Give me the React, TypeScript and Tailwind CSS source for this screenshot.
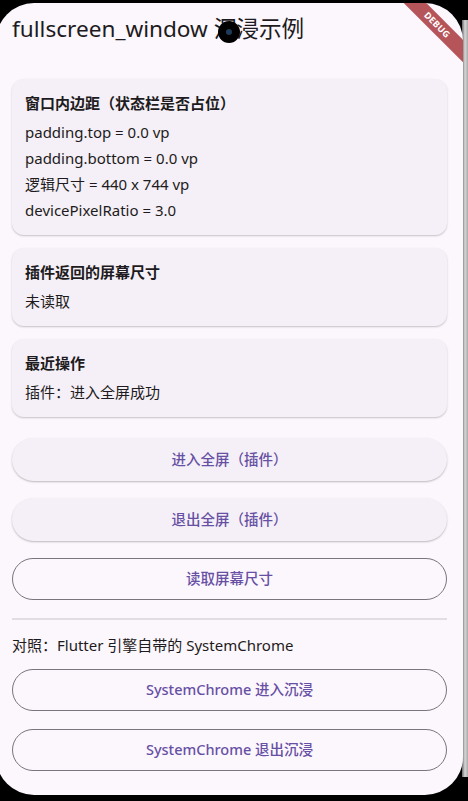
import React from "react";

const font = {
  fontFamily: '"Noto Sans", "Noto Sans CJK SC", sans-serif',
};

function InfoCard({ title, lines }: { title: string; lines: string[] }) {
  return (
    <div className="rounded-[12px] bg-[#F5F0F7] px-[13px] pt-[11px] pb-[12px] shadow-[0_1px_2px_rgba(0,0,0,0.22)]">
      <div className="text-[15px] leading-[26px] font-bold text-[#1D1B20]">
        {title}
      </div>
      <div className="mt-[3px]">
        {lines.map((line) => (
          <div key={line} className="text-[15px] leading-[26px] text-[#1D1B20]">
            {line}
          </div>
        ))}
      </div>
    </div>
  );
}

function ElevatedButton({ label }: { label: string }) {
  return (
    <button className="flex h-[43px] w-full items-center justify-center rounded-full bg-[#F5F0F7] text-[14.5px] font-medium text-[#6750A4] shadow-[0_1px_2px_rgba(0,0,0,0.25)]">
      {label}
    </button>
  );
}

function OutlinedButton({ label }: { label: string }) {
  return (
    <button className="flex h-[42px] w-full items-center justify-center rounded-full border border-[#79747E] text-[14.5px] font-medium text-[#6750A4]">
      {label}
    </button>
  );
}

export default function App() {
  return (
    <div
      className="relative h-[801px] w-[468px] overflow-hidden bg-black"
      style={font}
    >
      {/* right bezel */}
      <div className="absolute right-0 top-[20px] bottom-[24px] w-[6px] bg-gradient-to-r from-[#6b6b6b] via-[#d8d8d8] to-[#a8a8a8]" />

      {/* screen */}
      <div className="relative mt-[3px] ml-[-4px] h-[792px] w-[467px] overflow-hidden rounded-[38px] bg-[#FCF6FD]">
        {/* debug ribbon */}
        <div className="absolute right-[-34px] top-[14px] flex h-[16px] w-[120px] rotate-45 items-center justify-center bg-[#B5555A]">
          <span className="text-[9px] font-bold tracking-[0.3px] text-white">
            DEBUG
          </span>
        </div>

        {/* camera */}
        <div className="absolute left-[222px] top-[18px] flex h-[22px] w-[22px] items-center justify-center rounded-full bg-black">
          <div className="h-[6px] w-[6px] rounded-full bg-[#1f3b5a]" />
        </div>

        <div className="pl-[16px] pr-[16px]">
          <div className="flex h-[52px] items-center">
            <span className="text-[22.6px] text-[#1D1B20]">
              fullscreen_window 沉浸示例
            </span>
          </div>

          <div className="flex flex-col gap-[13px] pt-[24px]">
            <InfoCard
              title="窗口内边距（状态栏是否占位）"
              lines={[
                "padding.top = 0.0 vp",
                "padding.bottom = 0.0 vp",
                "逻辑尺寸 = 440 x 744 vp",
                "devicePixelRatio = 3.0",
              ]}
            />
            <InfoCard title="插件返回的屏幕尺寸" lines={["未读取"]} />
            <InfoCard title="最近操作" lines={["插件：进入全屏成功"]} />
          </div>

          <div className="mt-[21px] flex flex-col gap-[17px]">
            <ElevatedButton label="进入全屏（插件）" />
            <ElevatedButton label="退出全屏（插件）" />
            <OutlinedButton label="读取屏幕尺寸" />
          </div>

          <div className="mt-[18px] h-[2px] bg-[#E2DDE4]" />

          <div className="mt-[15px] text-[15px] leading-[20px] text-[#1D1B20]">
            对照：Flutter 引擎自带的 SystemChrome
          </div>

          <div className="mt-[14px] flex flex-col gap-[18px]">
            <OutlinedButton label="SystemChrome 进入沉浸" />
            <OutlinedButton label="SystemChrome 退出沉浸" />
          </div>
        </div>
      </div>
    </div>
  );
}
